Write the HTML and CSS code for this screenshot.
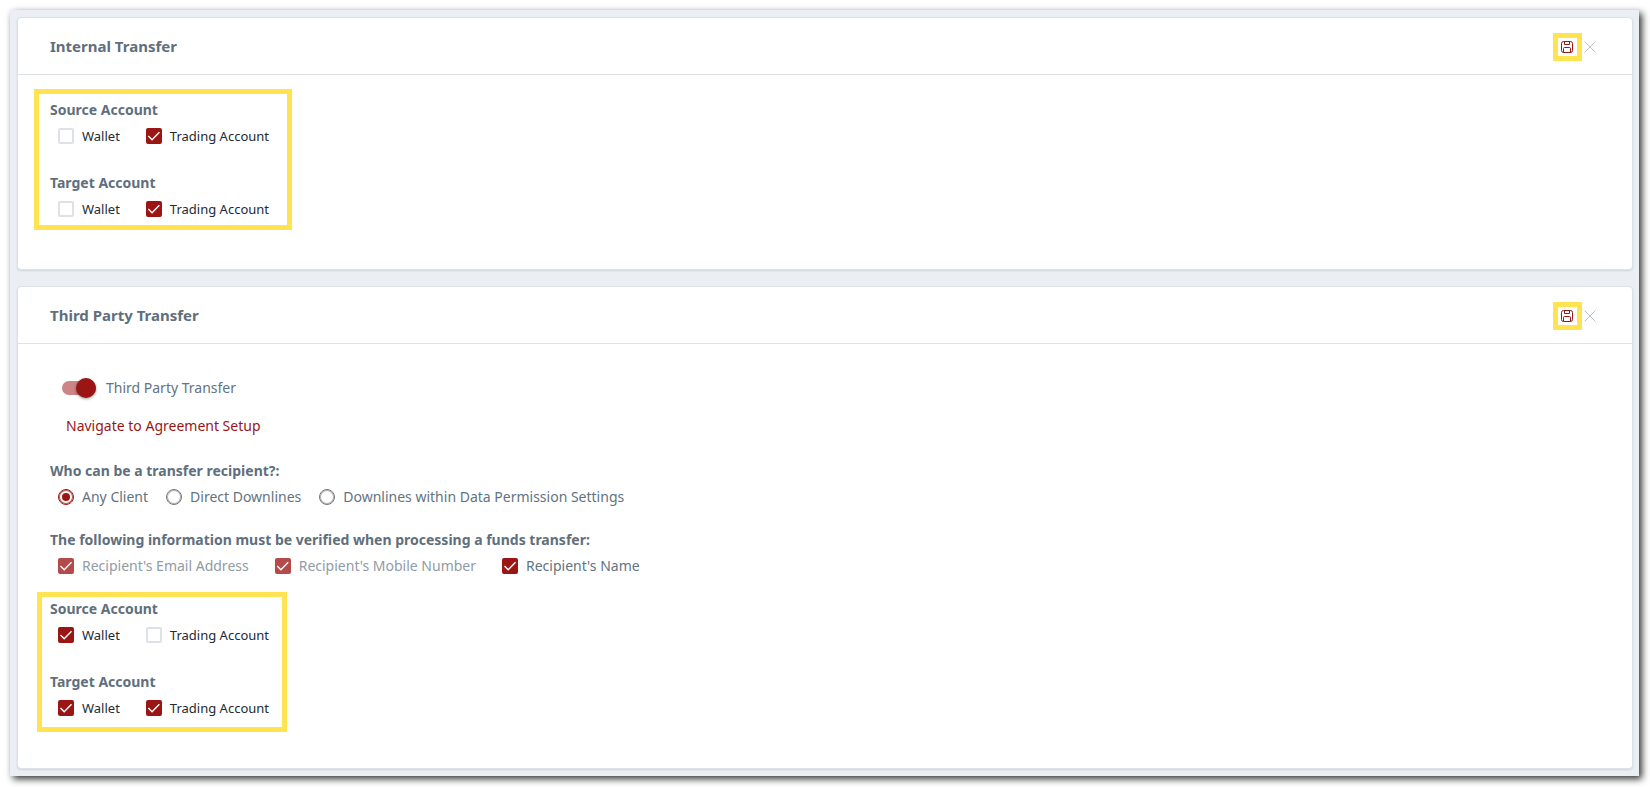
FILE: index.html
```
<!DOCTYPE html>
<html lang="en">
<head>
    <meta charset="UTF-8">
    <meta name="viewport" content="width=device-width, initial-scale=1">
    <title>Transfer Settings</title>
    <link rel="stylesheet" href="styles.css">
</head>
<body>

<main class="panel">

    <section class="card">
        <div class="card-header">
            <h2>Internal Transfer</h2>
            <div class="card-tools">
                <button type="button" class="save-btn" aria-label="Save">
                    <svg viewBox="0 0 12 12"><rect x="0.5" y="0.5" width="11" height="11" rx="2"/><path d="M3.5 0.5v3h5v-3M2.5 11.5v-4q0-1 1-1h5q1 0 1 1v4"/></svg>
                </button>
                <button type="button" class="close-btn" aria-label="Close">
                    <svg viewBox="0 0 12 12"><path d="M0.5 0.5l11 11M11.5 0.5l-11 11"/></svg>
                </button>
            </div>
        </div>
        <div class="card-body internal-body">
            <div class="accounts highlight">
                <fieldset>
                    <legend>Source Account</legend>
                    <div class="options">
                        <label class="option small"><input type="checkbox">Wallet</label>
                        <label class="option small"><input type="checkbox" checked>Trading Account</label>
                    </div>
                </fieldset>
                <fieldset>
                    <legend>Target Account</legend>
                    <div class="options">
                        <label class="option small"><input type="checkbox">Wallet</label>
                        <label class="option small"><input type="checkbox" checked>Trading Account</label>
                    </div>
                </fieldset>
            </div>
        </div>
    </section>

    <section class="card">
        <div class="card-header">
            <h2>Third Party Transfer</h2>
            <div class="card-tools">
                <button type="button" class="save-btn" aria-label="Save">
                    <svg viewBox="0 0 12 12"><rect x="0.5" y="0.5" width="11" height="11" rx="2"/><path d="M3.5 0.5v3h5v-3M2.5 11.5v-4q0-1 1-1h5q1 0 1 1v4"/></svg>
                </button>
                <button type="button" class="close-btn" aria-label="Close">
                    <svg viewBox="0 0 12 12"><path d="M0.5 0.5l11 11M11.5 0.5l-11 11"/></svg>
                </button>
            </div>
        </div>
        <div class="card-body third-body">
            <div class="third-form">
                <label class="toggle"><input type="checkbox" role="switch" checked>Third Party Transfer</label>
                <a href="#" class="agreement">Navigate to Agreement Setup</a>
                <fieldset>
                    <legend>Who can be a transfer recipient?:</legend>
                    <div class="options radios">
                        <label class="option"><input type="radio" name="recipient" checked>Any Client</label>
                        <label class="option"><input type="radio" name="recipient">Direct Downlines</label>
                        <label class="option"><input type="radio" name="recipient">Downlines within Data Permission Settings</label>
                    </div>
                </fieldset>
                <fieldset>
                    <legend>The following information must be verified when processing a funds transfer:</legend>
                    <div class="options">
                        <label class="option disabled"><input type="checkbox" checked disabled>Recipient's Email Address</label>
                        <label class="option disabled"><input type="checkbox" checked disabled>Recipient's Mobile Number</label>
                        <label class="option"><input type="checkbox" checked>Recipient's Name</label>
                    </div>
                </fieldset>
            </div>
            <div class="accounts highlight">
                <fieldset>
                    <legend>Source Account</legend>
                    <div class="options">
                        <label class="option small"><input type="checkbox" checked>Wallet</label>
                        <label class="option small"><input type="checkbox">Trading Account</label>
                    </div>
                </fieldset>
                <fieldset>
                    <legend>Target Account</legend>
                    <div class="options">
                        <label class="option small"><input type="checkbox" checked>Wallet</label>
                        <label class="option small"><input type="checkbox" checked>Trading Account</label>
                    </div>
                </fieldset>
            </div>
        </div>
    </section>

</main>

</body>
</html>
```
FILE: styles.css
```
* {
    box-sizing: border-box;
}

body {
    margin: 0;
    padding: 10px 11px 11px 10px;
    background: #fff;
    color: #637381;
    font-family: "Noto Sans", "Segoe UI", sans-serif;
    font-size: 14px;
    line-height: 22px;
}

.panel {
    display: flex;
    flex-direction: column;
    gap: 16px;
    padding: 7px 6px 7px 7px;
    background: #ebeff3;
    box-shadow: 3px 3px 7px rgba(0, 0, 0, 0.8);
}

.card {
    background: #fff;
    border: 1px solid #dde2e7;
    border-radius: 4px;
    box-shadow: 0 1px 2px rgba(90, 110, 130, 0.2);
}

.card-header {
    display: flex;
    align-items: center;
    justify-content: space-between;
    height: 57px;
    padding: 0 36px 0 32px;
    border-bottom: 1px solid #dde1e4;
}

h2 {
    margin: 0;
    color: #5f6f7d;
    font-size: 15px;
    font-weight: 700;
}

.card-tools {
    display: flex;
    align-items: center;
    gap: 2px;
    padding-top: 1px;
}

button {
    display: flex;
    padding: 0;
    border: 0;
    background: none;
    cursor: pointer;
}

button svg {
    width: 12px;
    height: 12px;
    fill: none;
    stroke: currentColor;
}

.save-btn {
    padding: 3px 4px 3px 3px;
    border: 5px solid #ffe351;
    color: #9b1515;
}

.close-btn {
    color: #b9c5cd;
}

.internal-body {
    padding: 14px 16px 39px;
}

.third-body {
    padding: 29px 19px 36px;
}

.highlight {
    width: fit-content;
    border: 5px solid #ffe351;
}

.accounts {
    display: flex;
    flex-direction: column;
    gap: 21px;
}

.internal-body .accounts {
    padding: 5px 18px 1px 11px;
}

.third-body .accounts {
    margin-top: 11px;
    padding: 1px 13px 4px 8px;
}

fieldset {
    margin: 0;
    padding: 0;
    border: 0;
    min-width: 0;
}

legend {
    display: block;
    padding: 0;
    color: #5f6f7d;
    font-weight: 700;
}

.options {
    display: flex;
    flex-wrap: wrap;
    gap: 0 26px;
    padding-left: 8px;
}

.radios {
    column-gap: 18px;
}

.option,
.toggle {
    display: flex;
    align-items: center;
    height: 30px;
}

.option {
    gap: 8px;
}

.small {
    color: #212b36;
    font-size: 13px;
}

.disabled {
    color: #919ba5;
}

input {
    appearance: none;
    flex: none;
    width: 16px;
    height: 16px;
    margin: 0;
}

input[type="checkbox"] {
    display: grid;
    place-items: center;
    border: 2px solid #dee2e6;
    border-radius: 2px;
}

.option input[type="checkbox"]:checked {
    border-color: #9b1515;
    background: #9b1515;
}

.option input[type="checkbox"]:disabled {
    border-color: #b54a4b;
    background: #b54a4b;
}

/* tick */
.option input[type="checkbox"]:checked::before {
    content: "";
    width: 12px;
    height: 12px;
    background: #fff;
    clip-path: polygon(0 55%, 8% 46%, 35% 72%, 92% 15%, 100% 23%, 35% 89%);
}

input[type="radio"] {
    border: 1px solid #757575;
    border-radius: 50%;
    box-shadow: inset 0 0 0 1px #b4b4b4;
}

input[type="radio"]:checked {
    padding: 3px;
    border-color: #9b1515;
    background: #9b1515 content-box;
    box-shadow: inset 0 0 0 1px #b85c5c;
}

.third-form {
    display: flex;
    flex-direction: column;
    gap: 17px;
    padding-left: 13px;
}

.toggle {
    gap: 10px;
    padding-left: 12px;
}

.toggle input[type="checkbox"] {
    grid-template-rows: 14px;
    align-content: center;
    justify-items: end;
    width: 34px;
    height: 14px;
    border: 0;
    border-radius: 7px;
    background: #cc8485;
}

.toggle input::before {
    content: "";
    width: 20px;
    height: 20px;
    margin: -3px 0;
    border-radius: 50%;
    background: #9b1515;
    box-shadow: 0 1px 3px rgba(0, 0, 0, 0.4);
}

.agreement {
    align-self: flex-start;
    margin: -5px 0 6px 16px;
    color: #9b1515;
    text-decoration: none;
}
```
